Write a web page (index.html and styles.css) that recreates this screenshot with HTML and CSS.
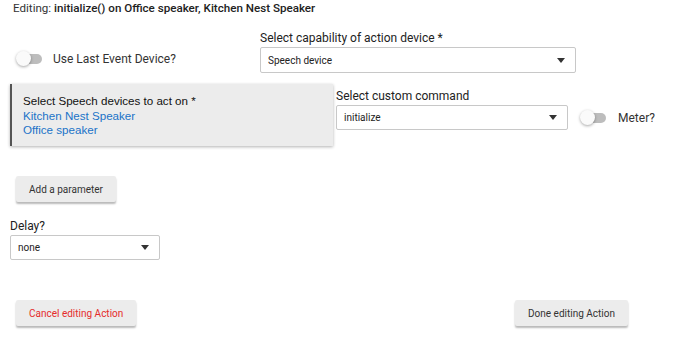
FILE: index.html
```html
<!DOCTYPE html>
<html>
<head>
<meta charset="utf-8">
<link rel="stylesheet" href="styles.css">
</head>
<body>
<div class="page">
  <div class="title">Editing: <span class="title-strong">initialize() on Office speaker, Kitchen Nest Speaker</span></div>

  <div class="row row-cap">
    <div class="left-toggle">
      <span class="switch"><span class="track"></span><span class="knob"></span></span>
      <span class="switch-label">Use Last Event Device?</span>
    </div>
    <div class="field field-cap">
      <div class="label">Select capability of action device *</div>
      <div class="select select-cap"><span>Speech device</span><span class="arrow"></span></div>
    </div>
  </div>

  <div class="row row-dev">
    <div class="devbox">
      <div class="dev-title">Select Speech devices to act on *</div>
      <div class="dev-link">Kitchen Nest Speaker</div>
      <div class="dev-link">Office speaker</div>
    </div>
    <div class="field field-cmd">
      <div class="label">Select custom command</div>
      <div class="select select-cmd"><span>initialize</span><span class="arrow"></span></div>
    </div>
    <div class="meter">
      <span class="switch"><span class="track"></span><span class="knob"></span></span>
      <span class="switch-label">Meter?</span>
    </div>
  </div>

  <div class="row row-param">
    <button class="btn">Add a parameter</button>
  </div>

  <div class="field field-delay">
    <div class="label">Delay?</div>
    <div class="select select-delay"><span>none</span><span class="arrow"></span></div>
  </div>

  <div class="row row-actions">
    <button class="btn btn-cancel">Cancel editing Action</button>
    <button class="btn btn-done">Done editing Action</button>
  </div>
</div>
</body>
</html>
```
FILE: styles.css
```css
html, body {
  margin: 0;
  padding: 0;
  background: #ffffff;
}
body {
  font-family: Roboto, "Liberation Sans", sans-serif;
  color: #222;
  width: 690px;
  height: 360px;
  overflow: hidden;
}
.page {
  padding: 0 0 0 10px;
}
.title {
  font-size: 11.6px;
  line-height: 16px;
  padding: 0 0 0 3px;
  color: #333;
  height: 16px;
}
.title-strong {
  font-weight: 500;
  color: #222;
}
.row {
  display: flex;
}
.row-cap {
  margin-top: 14px;
  height: 54px;
}
.left-toggle {
  width: 250px;
  display: flex;
  align-items: center;
  padding-top: 4px;
  box-sizing: border-box;
}
.switch {
  position: relative;
  display: inline-block;
  width: 28px;
  height: 16px;
  flex: none;
}
.left-toggle .switch {
  margin-left: 6px;
}
.track {
  position: absolute;
  left: 6px;
  top: 3px;
  width: 20px;
  height: 10px;
  border-radius: 5px;
  background: #bdbdbd;
}
.knob {
  position: absolute;
  left: 0;
  top: 0;
  width: 15px;
  height: 15px;
  border-radius: 50%;
  background: #fafafa;
  box-shadow: 0 1px 3px rgba(0,0,0,0.35);
}
.switch-label {
  font-size: 12px;
  color: #333;
  margin-left: 9px;
}
.field {
  display: flex;
  flex-direction: column;
}
.label {
  font-size: 12px;
  line-height: 16px;
  color: #222;
}
.field-cap {
  width: 316px;
}
.select {
  box-sizing: border-box;
  border: 1px solid #c8c8c8;
  border-radius: 2px;
  display: flex;
  align-items: center;
  justify-content: space-between;
  font-size: 10px;
  color: #222;
  padding: 0 10px 0 7px;
  background: #fff;
}
.select-cap {
  height: 26px;
  margin-top: 1px;
}
.arrow {
  width: 0;
  height: 0;
  border-left: 4.5px solid transparent;
  border-right: 4.5px solid transparent;
  border-top: 5px solid #333;
}
.row-dev {
  margin-top: 0;
  height: 62px;
}
.devbox {
  width: 323px;
  height: 62px;
  box-sizing: border-box;
  background: #ececec;
  border-left: 2px solid #555;
  padding: 10px 0 0 11px;
  font-family: "Liberation Sans", Arial, sans-serif;
  font-size: 11.6px;
  line-height: 14.5px;
  box-shadow: 0 1px 3px rgba(0,0,0,0.3);
}
.dev-title {
  color: #111;
}
.dev-link {
  color: #1a73c8;
}
.field-cmd {
  margin-left: 3px;
  width: 232px;
  padding-top: 4px;
}
.select-cmd {
  height: 25px;
  margin-top: 1px;
}
.meter {
  display: flex;
  align-items: center;
  margin-left: 12px;
  padding-top: 26px;
  height: 16px;
}
.meter .switch-label {
  margin-left: 10px;
}
.row-param {
  margin-top: 30px;
}
.btn {
  font-family: Roboto, "Liberation Sans", sans-serif;
  font-size: 10px;
  background: #ececec;
  border: none;
  border-radius: 2px;
  box-shadow: 0 2px 2px rgba(0,0,0,0.28);
  color: #333;
  height: 26px;
  padding: 0 13px;
  margin-left: 6px;
  cursor: pointer;
}
.field-delay {
  margin-top: 16px;
  width: 150px;
}
.select-delay {
  height: 25px;
  margin-top: 1px;
}
.row-actions {
  margin-top: 40px;
  justify-content: space-between;
  width: 618px;
}
.btn-cancel {
  color: #e52b2b;
  padding: 0 13px;
}
.btn-done {
  padding: 0 13px;
}
```
